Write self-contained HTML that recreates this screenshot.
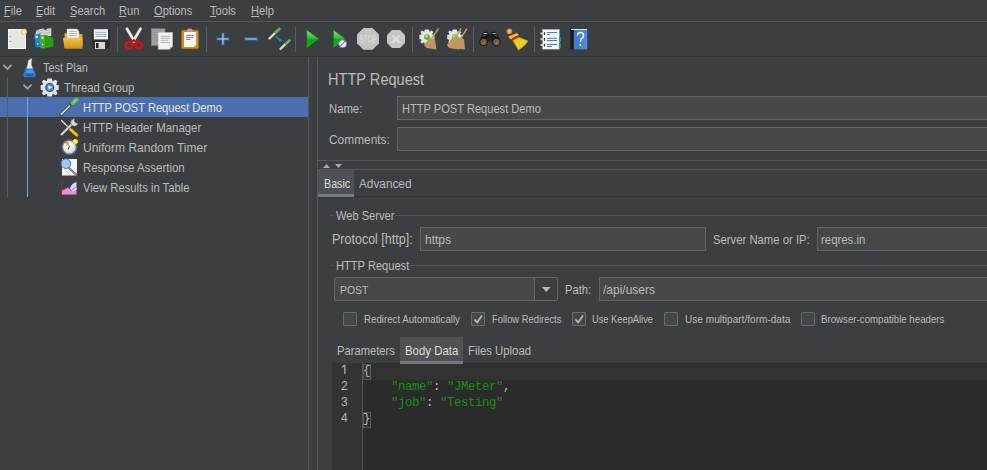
<!DOCTYPE html>
<html><head><meta charset="utf-8">
<style>
*{margin:0;padding:0;box-sizing:border-box}
html,body{width:987px;height:470px;overflow:hidden;background:#3C3F41}
body{position:relative;font-family:"Liberation Sans",sans-serif;color:#BBBBBB}
.a{position:absolute}
.t{position:absolute;transform-origin:0 0;white-space:pre;line-height:1;font-size:11.4px;color:#BBBBBB}
.ln{position:absolute;background:#555758}
.fld{position:absolute;background:#45494A;border:1px solid #646464}
.cb{position:absolute;width:14px;height:14px;border:1px solid #6B6B6B;background:#43494A;border-radius:1px}
u{text-decoration:none;border-bottom:1px solid #BBB}
svg{position:absolute;overflow:visible}
</style></head><body>
<!-- menu -->
<div class="t" style="transform:scaleX(0.8929);left:4px;top:5.07px;font-size:12.43px">File</div>
<div class="t" style="transform:scaleX(0.8929);left:36px;top:5.07px;font-size:12.43px">Edit</div>
<div class="t" style="transform:scaleX(0.8929);left:70px;top:5.07px;font-size:12.43px">Search</div>
<div class="t" style="transform:scaleX(0.8929);left:119px;top:5.07px;font-size:12.43px">Run</div>
<div class="t" style="transform:scaleX(0.8929);left:154px;top:5.07px;font-size:12.43px">Options</div>
<div class="t" style="transform:scaleX(0.8929);left:210px;top:5.07px;font-size:12.43px">Tools</div>
<div class="t" style="transform:scaleX(0.8929);left:251px;top:5.07px;font-size:12.43px">Help</div>
<div class="a" style="left:4px;top:16px;width:6px;height:1px;background:#BBBBBB"></div>
<div class="a" style="left:36px;top:16px;width:6px;height:1px;background:#BBBBBB"></div>
<div class="a" style="left:70px;top:16px;width:6px;height:1px;background:#BBBBBB"></div>
<div class="a" style="left:119px;top:16px;width:7px;height:1px;background:#BBBBBB"></div>
<div class="a" style="left:154px;top:16px;width:9px;height:1px;background:#BBBBBB"></div>
<div class="a" style="left:210px;top:16px;width:6px;height:1px;background:#BBBBBB"></div>
<div class="a" style="left:251px;top:16px;width:8px;height:1px;background:#BBBBBB"></div>
<div class="ln" style="left:0;top:21px;width:987px;height:1px"></div>
<!-- toolbar bottom -->
<div class="a" style="left:0;top:56px;width:987px;height:1px;background:#313335"></div>

<!-- tree -->
<div class="a" style="left:0;top:97px;width:308px;height:20px;background:#4B6EAF"></div>
<div class="a" style="left:7px;top:77px;width:1px;height:120px;background:#5A5D5F"></div>
<div class="a" style="left:27px;top:97px;width:1px;height:100px;background:#69A7EC"></div>
<div class="t" style="transform:scaleX(0.8929);left:43px;top:62.49px;font-size:12.21px">Test Plan</div>
<div class="t" style="transform:scaleX(0.8929);left:64px;top:82.15px;font-size:12.66px">Thread Group</div>
<div class="t" style="transform:scaleX(0.8929);left:82.9px;top:102.17px;font-size:12.43px;color:#E6E6E6">HTTP POST Request Demo</div>
<div class="t" style="transform:scaleX(0.8929);left:82.9px;top:122.14px;font-size:12.77px">HTTP Header Manager</div>
<div class="t" style="transform:scaleX(0.8929);left:82.9px;top:141.09px;font-size:13.46px">Uniform Random Timer</div>
<div class="t" style="transform:scaleX(0.8929);left:82.9px;top:162.15px;font-size:12.8px">Response Assertion</div>
<div class="t" style="transform:scaleX(0.8929);left:82.9px;top:182.16px;font-size:12.6px">View Results in Table</div>

<!-- split -->
<div class="ln" style="left:308px;top:57px;width:1px;height:413px"></div>
<div class="ln" style="left:317px;top:57px;width:1px;height:413px"></div>

<!-- right panel -->
<div class="t" style="transform:scaleX(0.8929);left:327.6px;top:71.17px;font-size:16.33px">HTTP Request</div>
<div class="t" style="transform:scaleX(0.8929);left:328.7px;top:102.75px;font-size:12.66px">Name:</div>
<div class="fld" style="left:397px;top:96px;width:600px;height:24px"></div>
<div class="t" style="transform:scaleX(0.8929);left:401.5px;top:102.77px;font-size:12.43px">HTTP POST Request Demo</div>
<div class="t" style="transform:scaleX(0.8929);left:328.7px;top:132.99px;font-size:13.33px">Comments:</div>
<div class="fld" style="left:397px;top:127px;width:600px;height:24px"></div>

<div class="ln" style="left:318px;top:160px;width:669px;height:1px"></div>
<div class="ln" style="left:318px;top:169px;width:669px;height:1px"></div>
<svg style="left:0;top:0" width="987" height="470"><path d="M323 168 L326.5 164 L330 168Z M335 164 L342 164 L338.5 168Z" fill="#AAAAAA"/></svg>

<!-- tabs basic -->
<div class="a" style="left:318px;top:196px;width:669px;height:1px;background:#323436"></div>
<div class="a" style="left:318px;top:170px;width:36px;height:27px;background:#4E5254"></div>
<div class="a" style="left:318px;top:194px;width:36px;height:3px;background:#747A80"></div>
<div class="a" style="left:318px;top:197px;width:36px;height:1px;background:#393C3E"></div>
<div class="t" style="transform:scaleX(0.8929);left:323.6px;top:178.11px;font-size:11.98px;color:#DDDDDD">Basic</div>
<div class="t" style="transform:scaleX(0.8929);left:359.4px;top:177.00px;font-size:13.22px">Advanced</div>

<!-- web server -->
<div class="ln" style="left:330px;top:215px;width:3px;height:1px"></div>
<div class="ln" style="left:396px;top:215px;width:591px;height:1px"></div>
<div class="t" style="transform:scaleX(0.8929);left:335.5px;top:210.17px;font-size:12.43px">Web Server</div>
<div class="t" style="transform:scaleX(0.8929);left:332px;top:231.93px;font-size:14.00px">Protocol [http]:</div>
<div class="fld" style="left:420px;top:227px;width:286px;height:24px"></div>
<div class="t" style="transform:scaleX(0.8929);left:424.5px;top:232.98px;font-size:13.44px">https</div>
<div class="t" style="transform:scaleX(0.8929);left:713px;top:233.95px;font-size:12.66px">Server Name or IP:</div>
<div class="fld" style="left:817px;top:227px;width:200px;height:24px"></div>
<div class="t" style="transform:scaleX(0.8929);left:821.4px;top:233.94px;font-size:12.77px">reqres.in</div>

<!-- http request -->
<div class="ln" style="left:330px;top:265px;width:3px;height:1px"></div>
<div class="ln" style="left:410px;top:265px;width:577px;height:1px"></div>
<div class="t" style="transform:scaleX(0.8929);left:335.5px;top:260.3px;font-size:12.45px">HTTP Request</div>
<div class="fld" style="left:334px;top:277px;width:224px;height:24px;border-radius:2px"></div>
<div class="a" style="left:534px;top:278px;width:23px;height:22px;background:#3C3F41;border-left:1px solid #646464;border-radius:0 2px 2px 0"></div>
<svg style="left:0;top:0" width="987" height="470"><path d="M542 287 L550.5 287 L546.25 292Z" fill="#BBBBBB"/></svg>
<div class="t" style="transform:scaleX(0.8929);left:340.3px;top:284.44px;font-size:11.65px">POST</div>
<div class="t" style="transform:scaleX(0.8929);left:565.4px;top:284.46px;font-size:12.54px">Path:</div>
<div class="fld" style="left:599px;top:277px;width:400px;height:24px"></div>
<div class="t" style="transform:scaleX(0.8929);left:603.4px;top:283.38px;font-size:13.44px">/api/users</div>

<!-- checkboxes -->
<div class="cb" style="left:343px;top:312px"></div>
<div class="t" style="transform:scaleX(0.8929);left:363.5px;top:314.11px;font-size:10.86px">Redirect Automatically</div>
<div class="cb" style="left:471px;top:312px"></div>
<div class="t" style="transform:scaleX(0.8929);left:491.6px;top:314.15px;font-size:10.53px">Follow Redirects</div>
<div class="cb" style="left:572px;top:312px"></div>
<div class="t" style="transform:scaleX(0.8929);left:592px;top:315.16px;font-size:10.42px">Use KeepAlive</div>
<div class="cb" style="left:664px;top:312px"></div>
<div class="t" style="transform:scaleX(0.8929);left:684.7px;top:314.07px;font-size:11.31px">Use multipart/form-data</div>
<div class="cb" style="left:801px;top:312px"></div>
<div class="t" style="transform:scaleX(0.8929);left:821.4px;top:314.11px;font-size:10.86px">Browser-compatible headers</div>
<svg style="left:0;top:0" width="987" height="470"><path d="M474.4 319.4 L477.2 322.4 L482 315.6 M575.4 319.4 L578.2 322.4 L583 315.6" stroke="#BBBBBB" stroke-width="1.7" fill="none"/></svg>

<!-- editor -->
<div class="a" style="left:332px;top:363px;width:655px;height:107px;background:#2B2B2B"></div>
<div class="a" style="left:332px;top:363px;width:30px;height:107px;background:#313335"></div>
<div class="a" style="left:362px;top:363px;width:1px;height:107px;background:#555555"></div>
<div class="a" style="left:363px;top:364px;width:624px;height:16px;background:#323232"></div>
<!-- bottom tabs -->
<div class="a" style="left:400px;top:337px;width:63px;height:27px;background:#4E5254"></div>
<div class="a" style="left:400px;top:361px;width:63px;height:3px;background:#747A80"></div>
<div class="t" style="transform:scaleX(0.8929);left:337.4px;top:345.16px;font-size:12.54px">Parameters</div>
<div class="t" style="transform:scaleX(0.8929);left:405px;top:345.14px;font-size:12.77px;color:#DDDDDD">Body Data</div>
<div class="t" style="transform:scaleX(0.8929);left:468.4px;top:345.15px;font-size:12.71px">Files Upload</div>

<!-- code -->
<div class="a" style="left:363px;top:364px;width:8px;height:16px;border:1px solid #5A5A5A"></div>
<div class="a" style="left:363px;top:412px;width:8px;height:16px;border:1px solid #5A5A5A"></div>
<div class="a" id="code" style="left:363px;top:363px;font-family:'Liberation Mono',monospace;font-size:12.4px;letter-spacing:-0.44px;line-height:16px;white-space:pre;color:#BBBBBB">{
    <span style="color:#149014">"name"</span>: <span style="color:#149014">"JMeter"</span>,
    <span style="color:#149014">"job"</span>: <span style="color:#149014">"Testing"</span>
}</div>
<div class="a" id="gut" style="left:341px;top:362px;font-family:'Liberation Sans',sans-serif;font-size:12px;line-height:16px;white-space:pre;color:#B4B4B4"> 
2
3
4</div>
<!-- icons -->
<svg style="left:0;top:0" width="987" height="470" viewBox="0 0 987 470">
<defs>
<linearGradient id="gGreen" x1="0" y1="0" x2="0" y2="1"><stop offset="0" stop-color="#9BD89B"/><stop offset="0.45" stop-color="#3DB33D"/><stop offset="0.55" stop-color="#13A013"/><stop offset="1" stop-color="#0DBF0D"/></linearGradient>
<linearGradient id="gFold" x1="0" y1="0" x2="0" y2="1"><stop offset="0" stop-color="#F2C24A"/><stop offset="1" stop-color="#D38E10"/></linearGradient>
<linearGradient id="gBlueBook" x1="0" y1="0" x2="1" y2="0"><stop offset="0" stop-color="#3A78CC"/><stop offset="1" stop-color="#4D8EE0"/></linearGradient>
<radialGradient id="gBall" cx="0.4" cy="0.35" r="0.7"><stop offset="0" stop-color="#C8F59A"/><stop offset="0.6" stop-color="#3EBE1E"/><stop offset="1" stop-color="#1E8A10"/></radialGradient>
</defs>
<!-- sep -->
<g fill="#5B5E60"><rect x="117" y="27" width="1" height="25"/><rect x="206" y="27" width="1" height="25"/><rect x="295" y="27" width="1" height="25"/><rect x="412" y="27" width="1" height="25"/><rect x="473" y="27" width="1" height="25"/><rect x="534" y="27" width="1" height="25"/></g>
<!-- new -->
<rect x="8.5" y="29.5" width="17" height="19" fill="#E6E6E6" stroke="#FAFAFA" stroke-width="1"/>
<circle cx="10.5" cy="36.5" r="0.6" fill="#777"/><circle cx="10.5" cy="41.5" r="0.6" fill="#777"/>
<circle cx="24" cy="31.8" r="2.3" fill="#F6F6F0" stroke="#E8D060" stroke-width="1.3"/>
<!-- templates -->
<path d="M35 35 L36.5 30.5 L40 29 L43.5 28.5 L45 30.5 L47.5 28.5 L51.3 28.3 L51.3 36 L35 36Z" fill="#D4D4D4"/>
<path d="M37 31 L43 30 M38 33 L44 32 M46 30.5 L50.5 30 M46 33 L50.5 32.5" stroke="#A8A8A8" stroke-width="0.6"/>
<path d="M34 34.6 L40.5 33.5 L41 47 L35.8 47.5Z" fill="#1E80D8"/>
<path d="M35.3 36 L37.8 35.6 L38 38 L35.6 38.3Z" fill="#E0F0FF"/><circle cx="37.8" cy="43.8" r="0.7" fill="#E8F0F8"/>
<path d="M40 35.5 L45.3 34.8 L45.3 48.6 L40.4 48.2Z" fill="#3CB41C"/>
<path d="M45.3 34.8 L53.3 38 L53.3 46.5 L45.3 48.6Z" fill="#28A010"/>
<path d="M41.5 36.6 L43.6 36.4 L43.6 39 L41.5 39.1Z" fill="#E8F0C0"/><circle cx="42.6" cy="44.5" r="0.8" fill="#FFF"/>
<!-- open -->
<path d="M64.5 33 L70 33 L71 34 L82.5 34 L82.5 46 L64.5 46Z" fill="#E2A62A"/>
<path d="M67 29 L77 29 L79 31.5 L79 38 L67 38Z" fill="#F4F4F4" stroke="#BBB" stroke-width="0.5"/>
<path d="M69 31.5 H77 M69 33.5 H77 M69 35.5 H77" stroke="#999" stroke-width="0.7"/>
<path d="M63 38 L82.5 38 L82.5 48.8 L64.5 48.8 Z" fill="url(#gFold)"/>
<!-- save -->
<path d="M91.5 29 H110.5 V49 H91.5Z" fill="#2E2E2E" stroke="#4a4a4a" stroke-width="0.6"/>
<rect x="93.8" y="29.2" width="14.2" height="10.2" fill="#F2F6FA"/>
<path d="M95.5 32.3 H106.5 M95.5 34.4 H106.5 M95.5 36.5 H106.5" stroke="#7FA7D0" stroke-width="0.9"/>
<rect x="95" y="42" width="10" height="7" fill="#D6D6D6"/><rect x="96" y="43" width="2.5" height="5" fill="#222"/>
<!-- cut -->
<path d="M127 28.8 L134.3 41.2 M140.5 28.8 L133.2 41.2" stroke="#808080" stroke-width="3.4" stroke-linecap="round"/>
<path d="M127 28.8 L134.3 41.2 M140.5 28.8 L133.2 41.2" stroke="#EEEEEE" stroke-width="2.3" stroke-linecap="round"/>
<circle cx="129" cy="45.2" r="3.1" fill="none" stroke="#D81010" stroke-width="2.5"/>
<circle cx="138.7" cy="45.2" r="3.1" fill="none" stroke="#D81010" stroke-width="2.5"/>
<path d="M131 42.5 L133.8 40 L136.6 42.5" stroke="#D81010" stroke-width="2" fill="none"/>
<circle cx="133.8" cy="40.6" r="0.7" fill="#333"/>
<!-- copy -->
<rect x="151.5" y="28.8" width="13.5" height="16.5" fill="#A0A0A0" stroke="#8A8A8A" stroke-width="0.6"/>
<path d="M153.5 32.5 H158 M153.5 35 H158 M153.5 37.5 H158 M153.5 40 H158" stroke="#8089A8" stroke-width="0.7"/>
<path d="M158.3 32.6 H172.5 V46.5 L169.5 49.3 H158.3Z" fill="#F4F4F4" stroke="#C8C8C8" stroke-width="0.6"/>
<path d="M169.5 49.3 L169.5 46.5 L172.5 46.5Z" fill="#BDBDBD"/>
<path d="M160.5 36.3 H170 M160.5 38.3 H170 M160.5 40.3 H168.5 M160.5 42.5 H170" stroke="#9A9A9A" stroke-width="0.7"/>
<!-- paste -->
<rect x="181.6" y="30.2" width="16.8" height="18.5" rx="1" fill="#D48A14" stroke="#B06F0A" stroke-width="0.6"/>
<path d="M184 32 H196.2 V44.5 L194 47 H184Z" fill="#F6F6F6"/>
<path d="M186 35.5 H193.5 M186 37.5 H193.5 M186 39.5 H190.5" stroke="#8A8A8A" stroke-width="1"/>
<path d="M186.5 31.5 L188 28.7 H192 L193.5 31.5 Z" fill="#A8A8A8"/>
<!-- plus -->
<path d="M223 32.5 V45.5 M216.5 39 H229.5" stroke="#2F62B0" stroke-width="3.2"/>
<path d="M223 33.5 V44.5 M217.5 39 H228.5" stroke="#C6D8F0" stroke-width="1"/>
<!-- minus -->
<rect x="244.3" y="37.2" width="13.5" height="3.5" fill="#2F62B0"/>
<rect x="245.3" y="38.5" width="11.5" height="1" fill="#C6D8F0"/>
<!-- toggle -->
<path d="M269.5 38.5 L276 32" stroke="#DCDCDC" stroke-width="2.4" stroke-linecap="round"/>
<path d="M275.5 32.5 L279.5 28.8" stroke="#5FB84A" stroke-width="2.6" stroke-linecap="round"/>
<path d="M276 36 Q277.5 39 280.5 40" stroke="#2A88E8" stroke-width="1.1" fill="none"/><path d="M279 38 L282.5 40.7 L279 42Z" fill="#1E7FF0"/>
<path d="M280.5 49 L286.5 43" stroke="#D8D8D8" stroke-width="2.4" stroke-linecap="round"/>
<path d="M286 43.5 L289.5 40.5" stroke="#5FB84A" stroke-width="2.6" stroke-linecap="round"/>
<!-- play -->
<path d="M306.8 30 L319 38.8 L306.8 48Z" fill="url(#gGreen)" stroke="#0B7A0B" stroke-width="0.6"/>
<path d="M333.4 30 L345.5 38.8 L333.4 48Z" fill="url(#gGreen)" stroke="#0B7A0B" stroke-width="0.6"/>
<circle cx="342.6" cy="43.8" r="4" fill="#EEF2F8" stroke="#3F84D8" stroke-width="1"/>
<path d="M338.3 48.3 L346.8 39.3" stroke="#E01A1A" stroke-width="1"/>
<!-- stop -->
<path d="M363.5 28 H372.5 L379 34.5 V43.2 L372.5 49.7 H363.5 L357 43.2 V34.5Z" fill="#C4C4C4"/>
<text x="368" y="42.9" font-family="Liberation Sans" font-weight="bold" font-size="10.6" fill="#D6D6D6" text-anchor="middle" textLength="17.6" lengthAdjust="spacingAndGlyphs">STOP</text>
<path d="M392 30 H400 L405 35 V43 L400 48 H392 L387 43 V35Z" fill="#C6C6C6"/>
<path d="M392.5 35.5 L399.5 42.5 M399.5 35.5 L392.5 42.5" stroke="#DCDCDC" stroke-width="2.4"/>
<!-- clear -->
<g transform="translate(426.9 37)">
<path d="M-2 -7.5 H2 L2.7 -5.2 L5 -6.5 L6.5 -5 L5.2 -2.7 L7.5 -2 V2 L5.2 2.7 L6.5 5 L5 6.5 L2.7 5.2 L2 7.5 H-2 L-2.7 5.2 L-5 6.5 L-6.5 5 L-5.2 2.7 L-7.5 2 V-2 L-5.2 -2.7 L-6.5 -5 L-5 -6.5 L-2.7 -5.2Z" fill="#E4E4E4"/>
<circle r="2.8" fill="url(#gBall)"/></g>
<path d="M438.5 28.5 L432 38" stroke="#C09860" stroke-width="1.5"/>
<path d="M430 37 L435 39.5 L436.5 49.5 L426.5 48 L424 45Z" fill="#C49A62"/>
<path d="M428 41 L427 47 M431 40 L430.5 48 M434 41 L434 48" stroke="#A27A48" stroke-width="0.5"/>
<g transform="translate(454.7 37)">
<path d="M-2 -7.5 H2 L2.7 -5.2 L5 -6.5 L6.5 -5 L5.2 -2.7 L7.5 -2 V2 L5.2 2.7 L6.5 5 L5 6.5 L2.7 5.2 L2 7.5 H-2 L-2.7 5.2 L-5 6.5 L-6.5 5 L-5.2 2.7 L-7.5 2 V-2 L-5.2 -2.7 L-6.5 -5 L-5 -6.5 L-2.7 -5.2Z" fill="#E4E4E4"/>
<circle r="2.8" fill="url(#gBall)"/></g>
<path d="M461 28.5 L455 38 M467 28.5 L461 38" stroke="#C09860" stroke-width="1.5"/>
<path d="M452.5 37 L458 39 L459 49.5 L449 48 L447 45Z" fill="#C49A62"/>
<path d="M458.5 37 L464 39 L465 49.5 L455 48.5 L453 45Z" fill="#BE955C"/>
<!-- binoculars -->
<path d="M480.5 39 L483 33 Q484 31.8 485.5 31.8 H487.5 L489.8 35.5 H490.2 L492.5 31.8 H494.5 Q496 31.8 497 33 L499.5 39Z" fill="#141414"/>
<path d="M483.5 33.5 H487.5 M492.5 33.5 H496.5" stroke="#A8A8A8" stroke-width="1"/>
<path d="M482.5 36 L485.5 35.5 M494.5 35.5 L497.5 36" stroke="#7A7A7A" stroke-width="0.8"/>
<rect x="486.5" y="36.5" width="7" height="5" fill="#262626"/>
<circle cx="483.6" cy="41.8" r="4.3" fill="#121212"/><circle cx="496.4" cy="41.8" r="4.3" fill="#121212"/>
<circle cx="483.6" cy="42" r="2.9" fill="#7A5030" stroke="#8A8A8A" stroke-width="0.5"/><circle cx="496.4" cy="42" r="2.9" fill="#7A5030" stroke="#8A8A8A" stroke-width="0.5"/>
<path d="M482 43.5 L484 41 L485.5 43.5Z M494.8 43.5 L496.8 41 L498.3 43.5Z" fill="#C88838"/>
<path d="M482 40.5 L485 44 M494.8 40.5 L497.8 44" stroke="#B03020" stroke-width="0.5"/>
<!-- broom -->
<circle cx="509.4" cy="31.3" r="2.3" fill="#F0C070" stroke="#D08A28" stroke-width="1.1"/>
<path d="M508 36.8 L517 33 L518.8 35.2 L511 39.5Z" fill="#E8C428"/>
<path d="M511.8 38.2 L517.8 35.3 L519.2 37.4 L513 40.6Z" fill="#E41A1A"/>
<path d="M512.8 40.5 L519.2 37.4 L528 41 Q525 46 518.5 50 Z" fill="#E8C820" stroke="#C8A010" stroke-width="0.6"/>
<path d="M516 42 L518.5 48 M519.5 40.5 L522 46.5 M523 40.5 L524.5 44" stroke="#F6E070" stroke-width="0.6"/>
<!-- log -->
<rect x="542.7" y="29.6" width="16.5" height="19.5" fill="#F8F8F8" stroke="#C8C8C8" stroke-width="0.5"/>
<path d="M540.5 33.4 H545.5 M540.5 39.2 H545.5 M540.5 45 H545.5" stroke="#D0D0D0" stroke-width="2"/>
<path d="M544.6 32 V35 M544.6 38 V41 M544.6 43.6 V46.6" stroke="#222" stroke-width="0.9"/>
<path d="M547 32.5 H557 M547 34.5 H550 M547 38.3 H557 M547 40.5 H557 M547 44.5 H557 M547 46.5 H552" stroke="#1E6AE0" stroke-width="0.9"/>
<rect x="559.2" y="37" width="1.8" height="5" fill="#2F7CE0"/><rect x="559.2" y="43" width="1.8" height="5" fill="#20A020"/>
<!-- help -->
<rect x="570.3" y="29" width="4" height="20.4" fill="#1A1A1A"/>
<rect x="573.8" y="29.5" width="13.4" height="19.8" fill="url(#gBlueBook)"/>
<rect x="571" y="29" width="16" height="1" fill="#E8E8E8"/>
<path d="M577.5 35.5 Q577.5 32.5 580.5 32.5 Q583.5 32.5 583.5 35.5 Q583.5 37.5 581 39 L580.5 42" stroke="#F0F4FA" stroke-width="1.5" fill="none"/>
<circle cx="580.4" cy="45" r="1" fill="#F0F4FA"/>

<path d="M344.9 364.8 V374" stroke="#C0C0C0" stroke-width="1.1"/><path d="M341.9 367.4 L344.6 365.2" stroke="#B8B8B8" stroke-width="1.1"/>
<!-- tree chevrons -->
<path d="M3.4 64.8 L7.5 68.9 L11.6 64.8 M23.4 84.6 L27.5 88.7 L31.6 84.6" stroke="#A0A0A0" stroke-width="1.8" fill="none"/>
<!-- flask -->
<path d="M28.2 60.5 L31.8 58.2 L31.3 64.5 L35.2 74.5 Q35.6 76.7 33.4 76.7 H25.6 Q23.5 76.7 23.9 74.5 L27.8 64.5Z" fill="#E8E8EE" stroke="#9A9AA8" stroke-width="0.5"/>
<path d="M29.3 61 L29.3 65 L26.5 72" stroke="#FFFFFF" stroke-width="0.8" fill="none"/>
<path d="M25.9 68.6 H33.2 L35.2 74.5 Q35.6 76.7 33.4 76.7 H25.6 Q23.5 76.7 23.9 74.5Z" fill="#1F6FD8"/>
<path d="M26.8 69.5 H32.5 L33.8 73 H25.6Z" fill="#4A95EE"/>
<path d="M26.5 75.8 H33" stroke="#0E4FAA" stroke-width="1"/>
<!-- gear tree -->
<g transform="translate(49.7 87.5)">
<path d="M-2.2 -9 H2.2 L2.9 -6.3 L6 -7.8 L7.8 -6 L6.3 -2.9 L9 -2.2 V2.2 L6.3 2.9 L7.8 6 L6 7.8 L2.9 6.3 L2.2 9 H-2.2 L-2.9 6.3 L-6 7.8 L-7.8 6 L-6.3 2.9 L-9 2.2 V-2.2 L-6.3 -2.9 L-7.8 -6 L-6 -7.8 L-2.9 -6.3Z" fill="#E6E6E6"/>
<circle r="5.1" fill="#C0C0C8"/><circle r="4.4" fill="#264A8C"/><circle r="3.4" fill="#4E88D4"/>
<path d="M-1.3 -2.3 L2.6 0 L-1.3 2.3Z" fill="#F4F4F4"/></g>
<!-- pipette -->
<path d="M61 114.5 L71 104.5" stroke="#3A3A3A" stroke-width="3.2" stroke-linecap="round"/>
<path d="M61.3 114.2 L70.7 104.8" stroke="#E8E8E8" stroke-width="1.8" stroke-linecap="round"/>
<path d="M62 113 L69 106" stroke="#8A8A8A" stroke-width="0.5"/>
<path d="M69.8 105.8 L73 102.6" stroke="#2F6A2F" stroke-width="3.6"/>
<path d="M72.5 103.2 L76.8 99.6" stroke="#6FBE5A" stroke-width="3.8" stroke-linecap="round"/>
<path d="M73 102 L76 99.5" stroke="#A8E090" stroke-width="1"/>
<!-- tools -->
<path d="M61.5 120.5 L70.5 129.5" stroke="#444" stroke-width="2.4" stroke-linecap="round"/>
<path d="M61.5 120.5 L70.5 129.5" stroke="#F0F0F0" stroke-width="1.2" stroke-linecap="round"/>
<path d="M70.5 129.5 L76.8 135.2" stroke="#9A7000" stroke-width="3.6" stroke-linecap="round"/>
<path d="M70.5 129.5 L76.8 135.2" stroke="#F2C010" stroke-width="2.4" stroke-linecap="round"/>
<path d="M61.5 134.5 L72.5 123.5" stroke="#444" stroke-width="3" stroke-linecap="round"/>
<path d="M61.5 134.5 L72.5 123.5" stroke="#DADADA" stroke-width="1.8" stroke-linecap="round"/>
<circle cx="74.3" cy="122.5" r="3.7" fill="#D8D8D8" stroke="#555" stroke-width="0.6"/><path d="M75.2 118.3 L79 122 L76.5 123.6 L73.8 121Z" fill="#3C3F41"/>
<!-- timer -->
<defs><radialGradient id="gFace" cx="0.4" cy="0.35" r="0.7"><stop offset="0" stop-color="#FFFFFF"/><stop offset="0.7" stop-color="#E4E4E8"/><stop offset="1" stop-color="#C8C8D0"/></radialGradient>
<radialGradient id="gSun" cx="0.45" cy="0.4" r="0.6"><stop offset="0" stop-color="#FFFFF0"/><stop offset="0.45" stop-color="#F8E830"/><stop offset="1" stop-color="#D8C000"/></radialGradient></defs>
<circle cx="69.4" cy="147.2" r="7.8" fill="#6E6C90"/><circle cx="69.4" cy="147.2" r="6.3" fill="url(#gFace)"/>
<path d="M65 142.5 L69.5 141.5 L68.8 145.5 L67 146Z" fill="#E8C050"/>
<path d="M66 143 L68 142.5" stroke="#D07020" stroke-width="0.8"/>
<path d="M68.8 145.5 L69.5 146.5 L68 149.5" stroke="#303030" stroke-width="1" fill="none"/>
<circle cx="75.4" cy="141.6" r="2.7" fill="url(#gSun)"/>
<!-- assertion -->
<rect x="62" y="159" width="15" height="16.5" fill="#F4F4F4"/>
<path d="M69 168 L76.5 175" stroke="#5A5A5A" stroke-width="2" stroke-linecap="round"/>
<path d="M69 168 L76.5 175" stroke="#C8C8C8" stroke-width="0.8"/>
<circle cx="65.9" cy="163.7" r="4.8" fill="#9CCBF0" stroke="#4A7AB8" stroke-width="1"/>
<!-- table chart -->
<path d="M61.7 182 V194.7 H77" stroke="#777" stroke-width="0.6" stroke-dasharray="1 1" fill="none"/>
<path d="M62 194.5 V190.5 L68 187.5 L71.5 190.5 L76.5 186.5 V194.5Z" fill="#F08CD8"/>
<path d="M70 189 Q71 183.5 76.5 182 V190 L72.5 191.5Z" fill="#C8E0F8"/>
<path d="M62 190.5 L68 187.5 L71.5 190.5 L76.5 186.5" stroke="#D03098" stroke-width="0.7" fill="none"/>
</svg>
</body></html>
